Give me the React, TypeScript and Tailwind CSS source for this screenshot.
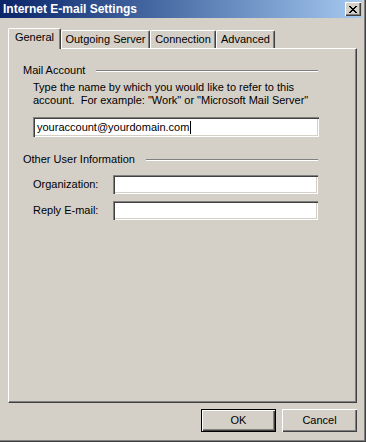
import React from "react";

const raised =
  "shadow-[inset_1px_1px_0_#ffffff,inset_-1px_-1px_0_#404040,inset_-2px_-2px_0_#808080]";
const sunken =
  "shadow-[inset_1px_1px_0_#808080,inset_2px_2px_0_#404040,inset_-1px_-1px_0_#ffffff,inset_-2px_-2px_0_#d4d0c8]";

function CloseGlyph() {
  // classic 8x7 pixel X
  const rows = ["11000011", "01100110", "00111100", "00011000", "00111100", "01100110", "11000011"];
  return (
    <svg width="8" height="7" viewBox="0 0 8 7" shapeRendering="crispEdges">
      {rows.map((r, y) =>
        r.split("").map((c, x) => (c === "1" ? <rect key={`${x}-${y}`} x={x} y={y} width="1" height="1" fill="#000" /> : null))
      )}
    </svg>
  );
}

function Tab({ label, width, active }: { label: string; width: number; active?: boolean }) {
  return (
    <div
      className={
        "flex items-start justify-center border-l border-t border-white rounded-t-[2px] shadow-[inset_-1px_0_0_#808080] border-r border-r-[#404040] bg-[#d4d0c8] " +
        (active ? "h-[21px] -mb-px relative z-10 pt-[2px]" : "h-[18px] pt-[2px]")
      }
      style={{ width }}
    >
      {label}
    </div>
  );
}

function GroupHeader({ title }: { title: string }) {
  return (
    <div className="flex items-center h-[13px] w-[295px]">
      <span className="whitespace-nowrap">{title}</span>
      <div className="flex-1 ml-[11px] h-0 border-t border-[#808080] border-b border-b-white" />
    </div>
  );
}

export default function App() {
  return (
    <div className="w-[366px] h-[442px] bg-[#d4d0c8] text-black text-[11px] leading-[13px] font-['Liberation_Sans',Arial,sans-serif] shadow-[inset_-1px_-1px_0_#404040,inset_-2px_-2px_0_#808080] overflow-hidden">
      {/* title bar */}
      <div className="h-[18px] w-[362px] flex items-center justify-between pl-[3px] pr-[1px] bg-gradient-to-r from-[#0a246a] to-[#a6caf0]">
        <span className="text-white font-bold text-[12px]">Internet E-mail Settings</span>
        <div className={"w-[16px] h-[14px] bg-[#d4d0c8] flex items-center justify-center " + raised}>
          <CloseGlyph />
        </div>
      </div>

      {/* tabs */}
      <div className="ml-[8px] mt-[10px] flex items-end h-[20px]">
        <Tab label="General" width={53} active />
        <Tab label="Outgoing Server" width={89} />
        <Tab label="Connection" width={66} />
        <Tab label="Advanced" width={59} />
      </div>

      {/* panel */}
      <div className="ml-[8px] w-[349px] h-[355px] border-l border-t border-white shadow-[inset_-1px_-1px_0_#808080] border-r border-b border-r-[#404040] border-b-[#404040] pt-[15px] pl-[14px]">
        <GroupHeader title="Mail Account" />
        <div className="pl-[10px] mt-[4px]">
          <p>Type the name by which you would like to refer to this</p>
          <p>account.&nbsp; For example: "Work" or "Microsoft Mail Server"</p>
          <div className={"mt-[10px] w-[286px] h-[20px] bg-white flex items-center pl-[4px] " + sunken}>
            <span>youraccount@yourdomain.com</span>
            <span className="ml-px w-px h-[13px] bg-black" />
          </div>
        </div>

        <div className="mt-[16px]">
          <GroupHeader title="Other User Information" />
        </div>
        <div className="pl-[10px] mt-[9px] flex flex-col gap-[7px]">
          <div className="flex items-center">
            <span className="w-[80px]">Organization:</span>
            <div className={"w-[205px] h-[19px] bg-white " + sunken} />
          </div>
          <div className="flex items-center">
            <span className="w-[80px]">Reply E-mail:</span>
            <div className={"w-[205px] h-[19px] bg-white " + sunken} />
          </div>
        </div>
      </div>

      {/* buttons */}
      <div className="mt-[6px] w-[357px] flex justify-end gap-[6px]">
        <div className="w-[75px] h-[23px] border border-black">
          <div className={"w-full h-full flex items-center justify-center " + raised}>OK</div>
        </div>
        <div className={"w-[75px] h-[23px] flex items-center justify-center " + raised}>Cancel</div>
      </div>
    </div>
  );
}
